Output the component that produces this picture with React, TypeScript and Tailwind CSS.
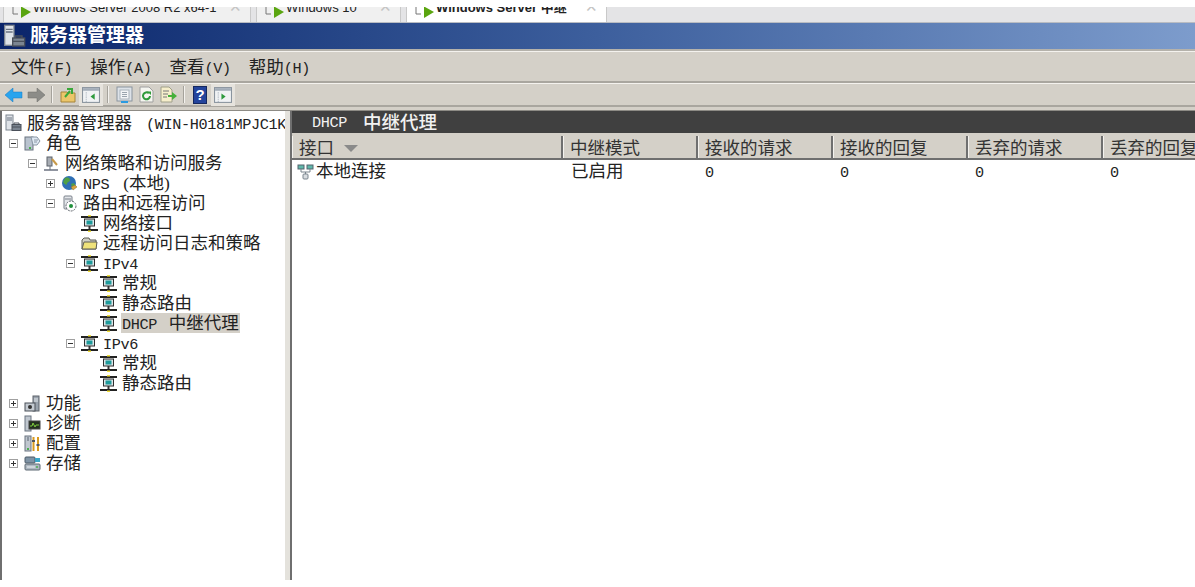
import React from "react";

const cjk = "font-['Liberation_Serif','Noto_Sans_CJK_SC',serif]";

// latin part of the old SimSun look: half-width monospace
function L({ children }: { children: React.ReactNode }) {
  return <span className="font-['Liberation_Mono',monospace] text-[15.2px] tracking-[-0.36px]">{children}</span>;
}

function ServerIcon({ small }: { small?: boolean }) {
  return (
    <svg width={small ? 18 : 24} height={small ? 18 : 24} viewBox="0 0 18 18">
      <rect x="2" y="1" width="7" height="15" fill="#dfe3e8" stroke="#7d8590" strokeWidth="1" />
      <path d="M3 4h5M3 6h5" stroke="#6b7482" />
      <rect x="8" y="10.500" width="9" height="6" fill="#7b8591" stroke="#4a505a" />
      <path d="M10 10.500V9h5v1.500M8 13h9" fill="none" stroke="#4a505a" />
    </svg>
  );
}

function RolesIcon() {
  return (
    <svg width="17" height="17" viewBox="0 0 17 17">
      <rect x="1" y="2" width="8" height="13" fill="#b9c3cf" stroke="#6a7480" />
      <path d="M7 2h6l3 4-3 4H9z" fill="#dfe8f2" stroke="#8a96a4" />
      <path d="M10 5h4M10 7h3" stroke="#8a96a4" />
      <rect x="5" y="12" width="2" height="2" fill="#4caf50" />
    </svg>
  );
}

function PolicyIcon() {
  return (
    <svg width="17" height="17" viewBox="0 0 17 17">
      <rect x="4" y="2" width="5" height="9" fill="#a8adb4" stroke="#5d636b" />
      <path d="M9 4l5 6" stroke="#c89a4a" strokeWidth="2" />
      <path d="M1 15h14" stroke="#6b7280" strokeWidth="1.500" />
      <path d="M7 11v4" stroke="#6b7280" />
    </svg>
  );
}

function GlobeIcon() {
  return (
    <svg width="17" height="17" viewBox="0 0 17 17">
      <circle cx="8" cy="8" r="7" fill="#2f6fb5" />
      <path d="M4 3c3-1 5 0 5 2S6 7 6 9 3 9 2 7zM10 9c2-1 4-1 4 1s-2 3-3 2z" fill="#4fa045" />
      <path d="M10 12l4-2 2 2-4 3z" fill="#d9a441" stroke="#8a6a2a" strokeWidth=".5" />
    </svg>
  );
}

function RoutingIcon() {
  return (
    <svg width="17" height="17" viewBox="0 0 17 17">
      <rect x="3" y="1" width="8" height="13" rx="1" fill="#e3e6ea" stroke="#7a818a" />
      <path d="M4 4h6" stroke="#7a818a" />
      <circle cx="10" cy="11" r="5" fill="#fff" stroke="#5d636b" strokeDasharray="2 1" />
      <circle cx="10" cy="11" r="2" fill="#1f8f3a" />
    </svg>
  );
}

// small computer with the yellow ports, used for most of the routing nodes
function NetIcon() {
  return (
    <svg width="17" height="17" viewBox="0 0 17 17">
      <path d="M0 2h17M0 15h17" stroke="#222" strokeWidth="2" />
      <rect x="3.500" y="4" width="10" height="7" fill="#dfe5e8" stroke="#2d2d2d" />
      <rect x="5.500" y="5.500" width="6" height="4" fill="#1d9a9a" />
      <path d="M8.500 11v3" stroke="#333" strokeWidth="2" />
      <rect x="7" y="0" width="3" height="1.500" fill="#f4e23c" />
      <rect x="7" y="15.500" width="3" height="1.500" fill="#f4e23c" />
    </svg>
  );
}

function FolderIcon() {
  return (
    <svg width="17" height="17" viewBox="0 0 17 17">
      <path d="M1 5l2-2h5l1 2h6v9H1z" fill="#cfcfc4" stroke="#5d5d55" />
      <path d="M3 7h13l-1 7H1z" fill="#efe27a" stroke="#5d5d55" />
    </svg>
  );
}

function FeaturesIcon() {
  return (
    <svg width="17" height="17" viewBox="0 0 17 17">
      <rect x="9" y="1" width="6" height="15" fill="#9aa3ad" stroke="#5d636b" />
      <path d="M10 4h4M10 6h4" stroke="#e2e6ea" />
      <rect x="1" y="8" width="10" height="8" fill="#c5cbd2" stroke="#4a5058" />
      <circle cx="6" cy="12" r="2" fill="#333" />
    </svg>
  );
}

function DiagIcon() {
  return (
    <svg width="17" height="17" viewBox="0 0 17 17">
      <rect x="1" y="1" width="6" height="15" fill="#c0c7cf" stroke="#6a7480" />
      <rect x="5" y="6" width="11" height="8" fill="#23301f" stroke="#444" />
      <path d="M6 11h2l1-3 2 4 1-2h3" fill="none" stroke="#7ecb3f" />
    </svg>
  );
}

function ConfigIcon() {
  return (
    <svg width="17" height="17" viewBox="0 0 17 17">
      <rect x="1" y="1" width="6" height="15" fill="#c0c7cf" stroke="#6a7480" />
      <path d="M3 3h2M3 5h2" stroke="#5b6472" />
      <rect x="3" y="13" width="2" height="2" fill="#4caf50" />
      <path d="M9.500 2v14" stroke="#d99a1c" strokeWidth="2" />
      <path d="M14 2v14" stroke="#d99a1c" strokeWidth="2" />
      <path d="M8 6h3M12.500 10h3" stroke="#555" strokeWidth="2" />
    </svg>
  );
}

function StorageIcon() {
  return (
    <svg width="17" height="17" viewBox="0 0 17 17">
      <rect x="1" y="2" width="10" height="6" rx="1" fill="#7f93a5" stroke="#4d5b68" />
      <rect x="11" y="3" width="5" height="4" fill="#3aa6c9" />
      <rect x="1" y="9" width="15" height="6" rx="1" fill="#aeb8c2" stroke="#5d6873" />
      <path d="M3 12h8" stroke="#eef1f4" />
      <circle cx="13" cy="12" r="1" fill="#4caf50" />
    </svg>
  );
}

function ConnIcon() {
  return (
    <svg width="17" height="17" viewBox="0 0 17 17">
      <rect x="1" y="2" width="6" height="4" fill="#5fb8aa" stroke="#55656e" />
      <rect x="10" y="2" width="6" height="4" fill="#5fb8aa" stroke="#55656e" />
      <path d="M4 6v3h9V6M8.500 9v3" fill="none" stroke="#7a858e" />
      <rect x="6" y="11" width="5" height="5" rx="1" fill="#d8dce0" stroke="#7a858e" />
    </svg>
  );
}

function Expander({ open }: { open?: boolean }) {
  return (
    <span className="w-[9px] h-[9px] border border-[#a0a0a0] bg-white flex items-center justify-center relative shrink-0">
      <span className="w-[5px] h-px bg-[#333]" />
      {!open && <span className="absolute w-px h-[5px] bg-[#333]" />}
    </span>
  );
}

function Row({
  indent,
  exp,
  icon,
  children,
  selected,
}: {
  indent: string;
  exp?: "open" | "closed";
  icon: React.ReactNode;
  children: React.ReactNode;
  selected?: boolean;
}) {
  return (
    <div className={`flex items-center h-5 whitespace-nowrap ${indent}`}>
      <span className="w-[15px] flex items-center shrink-0">
        {exp && <Expander open={exp === "open"} />}
      </span>
      <span className="w-[17px] h-[17px] shrink-0">{icon}</span>
      <span className={`ml-[4px] px-[1px] h-5 leading-5 ${selected ? "bg-[#d4d0c8]" : ""}`}>{children}</span>
    </div>
  );
}

function TabArrow() {
  return (
    <svg width="20" height="15" viewBox="0 0 20 15" className="shrink-0">
      <path d="M1 0v7h5" fill="none" stroke="#777" />
      <path d="M9 0h1l9 5-10 6z" fill="#5aa510" />
    </svg>
  );
}

function Tab({ w, active, label }: { w: string; active?: boolean; label: React.ReactNode }) {
  return (
    <div
      className={`${w} h-[15px] flex items-start overflow-hidden border-l border-r border-[#c9c9c9] pl-[8px] pr-[8px] ${
        active ? "bg-white" : "bg-[#f0f0f0]"
      }`}
    >
      <TabArrow />
      <span
        className={`ml-[1px] text-[13px] leading-[15px] whitespace-nowrap text-[#222] relative top-[-7px] font-['Liberation_Sans','Noto_Sans_CJK_SC',sans-serif] ${
          active ? "font-bold" : ""
        }`}
      >
        {label}
      </span>
      <span className="ml-auto text-[#c4c4c4] text-[15px] leading-[15px] relative top-[-7px]">✕</span>
    </div>
  );
}

function Sep() {
  return <span className="w-px h-[17px] bg-[#a5a29b] border-r border-[#f4f2ee] box-content mx-[4px]" />;
}

function ToolBtn({ active, children }: { active?: boolean; children: React.ReactNode }) {
  return (
    <span className={`h-[22px] flex items-center justify-center ${active ? "w-[24px] bg-[#e6e3dd]" : "w-[22px]"}`}>
      {children}
    </span>
  );
}

function PaneIcon({ side }: { side: "left" | "right" }) {
  return (
    <svg width="18" height="16" viewBox="0 0 17 15">
      <rect x=".5" y=".5" width="16" height="14" fill="#f0f2f4" stroke="#8a949e" />
      <rect x="1" y="1" width="15" height="2.500" fill="#a3adb8" />
      <path d="M4 5v9" stroke="#aab4be" strokeDasharray="1 1" />
      {side === "left" ? <path d="M12 6v6l-4-3z" fill="#2e9a3e" /> : <path d="M7 6v6l4-3z" fill="#2e9a3e" />}
    </svg>
  );
}

const columns = [
  { w: "w-[271px]", title: "接口", sort: true },
  { w: "w-[135px]", title: "中继模式" },
  { w: "w-[135px]", title: "接收的请求" },
  { w: "w-[135px]", title: "接收的回复" },
  { w: "w-[135px]", title: "丢弃的请求" },
  { w: "w-[135px]", title: "丢弃的回复" },
];

export default function App() {
  return (
    <div className={`w-[1195px] h-[587px] bg-white overflow-hidden flex flex-col text-[17.5px] text-[#222] ${cjk}`}>
      <div className="h-[7px] shrink-0 bg-white" />

      {/* browser tabs, cut off at the top */}
      <div className="h-[15px] shrink-0 flex bg-[#e4e4e6] pl-[3px] gap-[5px]">
        <Tab w="w-[248px]" label="Windows Server 2008 R2 x64-1" />
        <Tab w="w-[145px]" label="Windows 10" />
        <Tab w="w-[201px]" active label="Windows Server 中继" />
      </div>
      <div className="h-px shrink-0 bg-[#b9bcc2]" />

      {/* title bar */}
      <div className="h-[26px] shrink-0 flex items-center bg-gradient-to-r from-[#0a246a] via-[#3d5f9d] to-[#7d9ccc] text-white">
        <span className="w-[27px] pl-[2px] shrink-0">
          <ServerIcon />
        </span>
        <span className="text-[19px] font-bold ml-[3px]">服务器管理器</span>
      </div>
      <div className="h-[2px] shrink-0 bg-[#b5b2ab]" />

      {/* menu */}
      <div className="h-[32px] shrink-0 flex items-center bg-[#d4d0c8] border-t border-[#f4f2ee] border-b-2 border-b-[#a9a69f] pl-[11px] pt-[2px] gap-[18px]">
        <span>文件<L>(F)</L></span>
        <span>操作<L>(A)</L></span>
        <span>查看<L>(V)</L></span>
        <span>帮助<L>(H)</L></span>
      </div>

      {/* toolbar */}
      <div className="h-[24px] shrink-0 flex items-center bg-[#d4d0c8] border-t border-[#f4f2ee] border-b-2 border-b-[#a9a69f] pl-[3px]">
        <ToolBtn>
          <svg width="18" height="14" viewBox="0 0 18 14">
            <path d="M8 0L0 7l8 7v-4h9V4H8z" fill="#29a4ee" stroke="#1a78c2" strokeWidth=".5" />
          </svg>
        </ToolBtn>
        <ToolBtn>
          <svg width="18" height="14" viewBox="0 0 18 14">
            <path d="M10 0l8 7-8 7v-4H1V4h9z" fill="#8c8c88" stroke="#6c6c68" strokeWidth=".5" />
          </svg>
        </ToolBtn>
        <Sep />
        <ToolBtn>
          <svg width="16" height="17" viewBox="0 0 16 17">
            <path d="M1 6h6l1 1h7v9H1z" fill="#ecc66a" stroke="#a5843a" />
            <path d="M5 11l5-6M7 3h5v5" fill="none" stroke="#3aa83a" strokeWidth="2" />
          </svg>
        </ToolBtn>
        <ToolBtn active>
          <PaneIcon side="left" />
        </ToolBtn>
        <Sep />
        <ToolBtn>
          <svg width="17" height="17" viewBox="0 0 17 17">
            <rect x="1" y="1" width="15" height="14" fill="#dde2e8" stroke="#8a949e" />
            <rect x="4" y="4" width="9" height="9" fill="#f3f5f7" stroke="#aab3bc" />
            <path d="M6 6.500h5M6 8.500h5M6 10.500h5" stroke="#9aa4ae" />
            <rect x="5" y="15" width="7" height="2" fill="#2a9ae0" />
          </svg>
        </ToolBtn>
        <ToolBtn>
          <svg width="15" height="17" viewBox="0 0 15 17">
            <path d="M1 1h9l4 4v11H1z" fill="#f5f5f0" stroke="#a0a0a0" />
            <path d="M11 10a3.500 3.500 0 1 1-1.200-2.800" fill="none" stroke="#2f9a3a" strokeWidth="2" />
            <path d="M8 5.500h4v3.500z" fill="#2f9a3a" />
          </svg>
        </ToolBtn>
        <ToolBtn>
          <svg width="17" height="17" viewBox="0 0 17 17">
            <path d="M1 1h8l3 3v12H1z" fill="#f6eecb" stroke="#a0a08a" />
            <path d="M3 5h6M3 8h5M3 11h4" stroke="#777" />
            <path d="M8 9h4V6l5 4-5 4v-3H8z" fill="#45b03a" />
          </svg>
        </ToolBtn>
        <Sep />
        <ToolBtn>
          <span className="w-[14px] h-[18px] bg-[#24449c] border border-[#15285f] text-white text-[15px] leading-[16px] font-bold text-center font-['Liberation_Sans',sans-serif]">
            ?
          </span>
        </ToolBtn>
        <ToolBtn active>
          <PaneIcon side="right" />
        </ToolBtn>
      </div>
      <div className="h-[4px] shrink-0 bg-[#d4d0c8] border-b border-[#8d8b85]" />

      {/* main area */}
      <div className="h-[469px] shrink-0 flex bg-[#d4d0c8]">
        <div className="w-[2px] shrink-0 bg-[#6f6f6f]" />

        {/* tree */}
        <div className="w-[283px] shrink-0 bg-white pt-[2px] overflow-hidden">
          <div className="flex items-center h-5 whitespace-nowrap pl-[2px]">
            <span className="w-[20px] shrink-0">
              <ServerIcon small />
            </span>
            <span className="ml-[3px]">服务器管理器</span>
            <span className="ml-[14px]">
              <L>(WIN-H0181MPJC1K</L>
            </span>
          </div>
          <Row indent="pl-[7px]" exp="open" icon={<RolesIcon />}>角色</Row>
          <Row indent="pl-[26px]" exp="open" icon={<PolicyIcon />}>网络策略和访问服务</Row>
          <Row indent="pl-[44px]" exp="closed" icon={<GlobeIcon />}>
            <L>NPS</L>
            <span className="ml-[14px]">(本地)</span>
          </Row>
          <Row indent="pl-[44px]" exp="open" icon={<RoutingIcon />}>路由和远程访问</Row>
          <Row indent="pl-[64px]" icon={<NetIcon />}>网络接口</Row>
          <Row indent="pl-[64px]" icon={<FolderIcon />}>远程访问日志和策略</Row>
          <Row indent="pl-[64px]" exp="open" icon={<NetIcon />}><L>IPv4</L></Row>
          <Row indent="pl-[83px]" icon={<NetIcon />}>常规</Row>
          <Row indent="pl-[83px]" icon={<NetIcon />}>静态路由</Row>
          <Row indent="pl-[83px]" icon={<NetIcon />} selected>
            <L>DHCP </L>
            <span className="ml-[3px]">中继代理</span>
          </Row>
          <Row indent="pl-[64px]" exp="open" icon={<NetIcon />}><L>IPv6</L></Row>
          <Row indent="pl-[83px]" icon={<NetIcon />}>常规</Row>
          <Row indent="pl-[83px]" icon={<NetIcon />}>静态路由</Row>
          <Row indent="pl-[7px]" exp="closed" icon={<FeaturesIcon />}>功能</Row>
          <Row indent="pl-[7px]" exp="closed" icon={<DiagIcon />}>诊断</Row>
          <Row indent="pl-[7px]" exp="closed" icon={<ConfigIcon />}>配置</Row>
          <Row indent="pl-[7px]" exp="closed" icon={<StorageIcon />}>存储</Row>
        </div>

        {/* splitter */}
        <div className="w-[7px] shrink-0 flex">
          <div className="w-[5px] bg-[#e4e2dc]" />
          <div className="w-[2px] bg-[#6f6f6f]" />
        </div>

        {/* result pane */}
        <div className="flex-1 min-w-0 flex flex-col overflow-hidden bg-white">
          <div className="h-[22px] shrink-0 bg-[#404040] text-[#f2f2f2] text-[18.5px] flex items-center pl-[20px] pt-[3px] whitespace-nowrap font-medium">
            <L>DHCP</L>
            <span className="ml-[16px]">中继代理</span>
          </div>
          <div className="h-[3px] shrink-0 bg-[#d4d0c8]" />
          <div className="h-[24px] shrink-0 flex bg-[#d4d0c8] border-b-2 border-[#6f6f6f] overflow-hidden">
            {columns.map((c) => (
              <div
                key={c.title}
                className={`${c.w} shrink-0 flex items-center pl-[6px] pt-[3px] border-r-2 border-[#6f6f6f] border-l border-l-[#f4f2ee] whitespace-nowrap text-[#333]`}
              >
                {c.title}
                {c.sort && (
                  <svg width="14" height="7" viewBox="0 0 14 7" className="ml-[10px]">
                    <path d="M0 0h14L7 7z" fill="#8a8a8a" />
                  </svg>
                )}
              </div>
            ))}
          </div>
          <div className="flex h-[20px] mt-[1px] items-center whitespace-nowrap">
            <div className="w-[271px] shrink-0 flex items-center pl-[5px]">
              <span className="w-[17px] h-[17px] shrink-0">
                <ConnIcon />
              </span>
              <span className="ml-[2px]">本地连接</span>
            </div>
            <div className="w-[135px] shrink-0 pl-[8px]">已启用</div>
            <div className="w-[135px] shrink-0 pl-[7px]"><L>0</L></div>
            <div className="w-[135px] shrink-0 pl-[7px]"><L>0</L></div>
            <div className="w-[135px] shrink-0 pl-[7px]"><L>0</L></div>
            <div className="w-[135px] shrink-0 pl-[7px]"><L>0</L></div>
          </div>
        </div>
      </div>
    </div>
  );
}
